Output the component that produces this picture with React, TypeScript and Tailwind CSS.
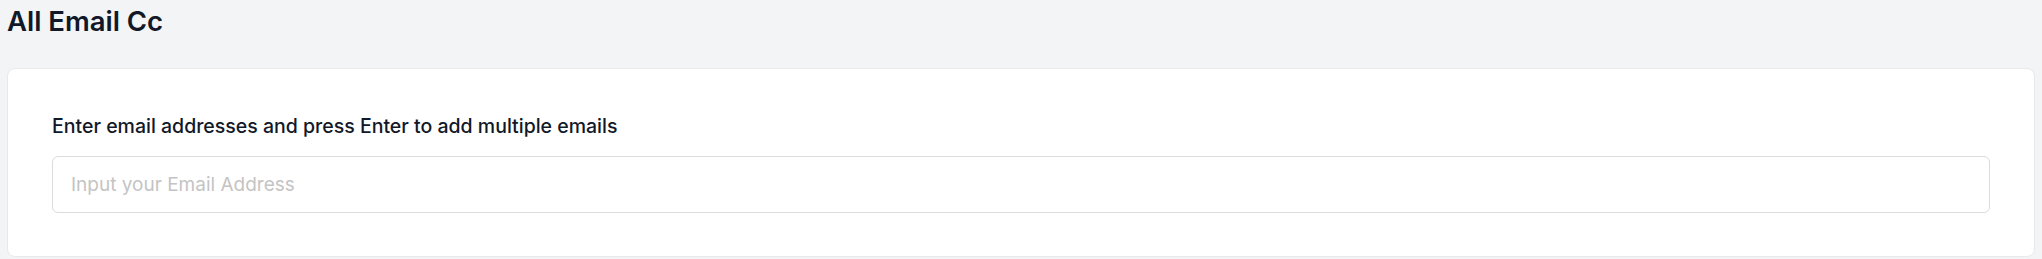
export default function App() {
  return (
    <div className="min-h-screen bg-[#f3f4f6] px-[7px] pt-[5px] font-['Inter',sans-serif]">
      <h1 className="text-[27.5px] font-semibold leading-[32px] text-[#111827]">All Email Cc</h1>
      <div className="mt-[31px] rounded-lg border border-[#e8e9ec] bg-white px-[44px] pb-[43px] pt-[43px]">
        <label className="block text-[19.5px] font-medium leading-[28px] text-[#111827]">
          Enter email addresses and press Enter to add multiple emails
        </label>
        <input
          type="text"
          placeholder="Input your Email Address"
          className="mt-[16px] block h-[57px] w-full rounded-md border border-[#dcdcdc] bg-white px-[18px] text-[19px] text-[#111827] outline-none placeholder:text-[#c4c4c4]"
        />
      </div>
    </div>
  );
}
